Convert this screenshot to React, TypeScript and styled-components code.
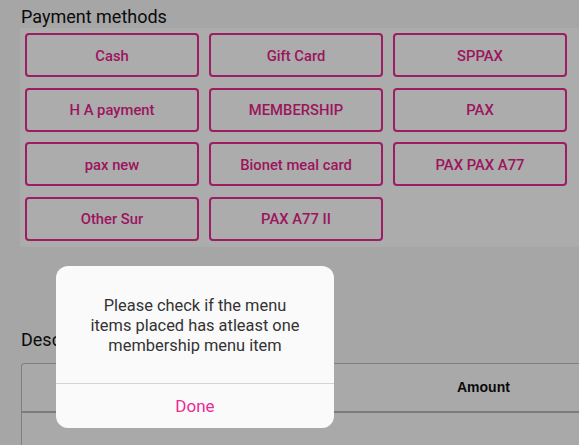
import React from "react";
import styled, { createGlobalStyle } from "styled-components";

const GlobalStyle = createGlobalStyle`
  html, body {
    margin: 0;
    padding: 0;
    background: #f6f6f6;
    font-family: Roboto, "Liberation Sans", Arial, sans-serif;
    overflow: hidden;
  }
`;

const Page = styled.div`
  width: 579px;
  height: 445px;
  padding: 6px 0 0 20px;
  box-sizing: border-box;
  position: relative;
`;

const SectionTitle = styled.h2`
  margin: 0 0 0 1px;
  font-size: 18px;
  font-weight: 400;
  line-height: 22px;
  color: #111;
`;

const MethodsPanel = styled.div`
  background: #ffffff;
  padding: 5px 12px 6px 5px;
  display: grid;
  grid-template-columns: repeat(3, 174px);
  grid-auto-rows: 44px;
  column-gap: 10px;
  row-gap: 10.5px;
`;

const MethodButton = styled.button`
  border: 2px solid #ea2a91;
  border-radius: 4px;
  background: transparent;
  color: #e91e8c;
  font-family: Roboto, "Liberation Sans", Arial, sans-serif;
  font-size: 14.8px;
  font-weight: 500;
  padding-top: 2px;
  cursor: pointer;
`;

const DescTitle = styled(SectionTitle)`
  margin-top: 82px;
  margin-bottom: 12px;
`;

const Table = styled.div`
  margin-left: 1px;
  border: 1px solid #bdbdbd;
  border-right: none;
  border-radius: 4px 0 0 0;
  background: #fbfbfb;
  height: 100px;
`;

const HeaderRow = styled.div`
  display: grid;
  grid-template-columns: 1fr 130px;
  height: 47px;
  border-bottom: 2px solid #b8b8b8;
  align-items: center;
`;

const HeaderCell = styled.div<{ $align?: string }>`
  font-family: "Liberation Sans", Arial, sans-serif;
  font-size: 14px;
  font-weight: 700;
  color: #111;
  text-align: ${(p) => p.$align || "left"};
  padding-left: 8px;
`;

const Overlay = styled.div`
  position: absolute;
  inset: 0;
  background: rgba(0, 0, 0, 0.325);
`;

const Dialog = styled.div`
  position: absolute;
  left: 56px;
  top: 266px;
  width: 278px;
  height: 162px;
  background: #fafafa;
  border-radius: 12px;
  display: flex;
  flex-direction: column;
  overflow: hidden;
`;

const Message = styled.p`
  flex: 1;
  margin: 0;
  padding: 30px 10px 0;
  text-align: center;
  font-size: 16.4px;
  line-height: 20px;
  color: #333;
`;

const DoneButton = styled.button`
  height: 45px;
  border: none;
  border-top: 1px solid #d4d4d4;
  background: transparent;
  color: #eb2b94;
  font-family: Roboto, "Liberation Sans", Arial, sans-serif;
  font-size: 17px;
  cursor: pointer;
`;

const methods = [
  "Cash",
  "Gift Card",
  "SPPAX",
  "H A payment",
  "MEMBERSHIP",
  "PAX",
  "pax new",
  "Bionet meal card",
  "PAX PAX A77",
  "Other Sur",
  "PAX A77 II",
];

export default function App() {
  return (
    <>
      <GlobalStyle />
      <Page>
        <SectionTitle>Payment methods</SectionTitle>
        <MethodsPanel>
          {methods.map((m) => (
            <MethodButton key={m}>{m}</MethodButton>
          ))}
        </MethodsPanel>
        <DescTitle>Description</DescTitle>
        <Table>
          <HeaderRow>
            <HeaderCell />
            <HeaderCell>Amount</HeaderCell>
          </HeaderRow>
        </Table>
        <Overlay />
        <Dialog>
          <Message>
            Please check if the menu
            <br />
            items placed has atleast one
            <br />
            membership menu item
          </Message>
          <DoneButton>Done</DoneButton>
        </Dialog>
      </Page>
    </>
  );
}
